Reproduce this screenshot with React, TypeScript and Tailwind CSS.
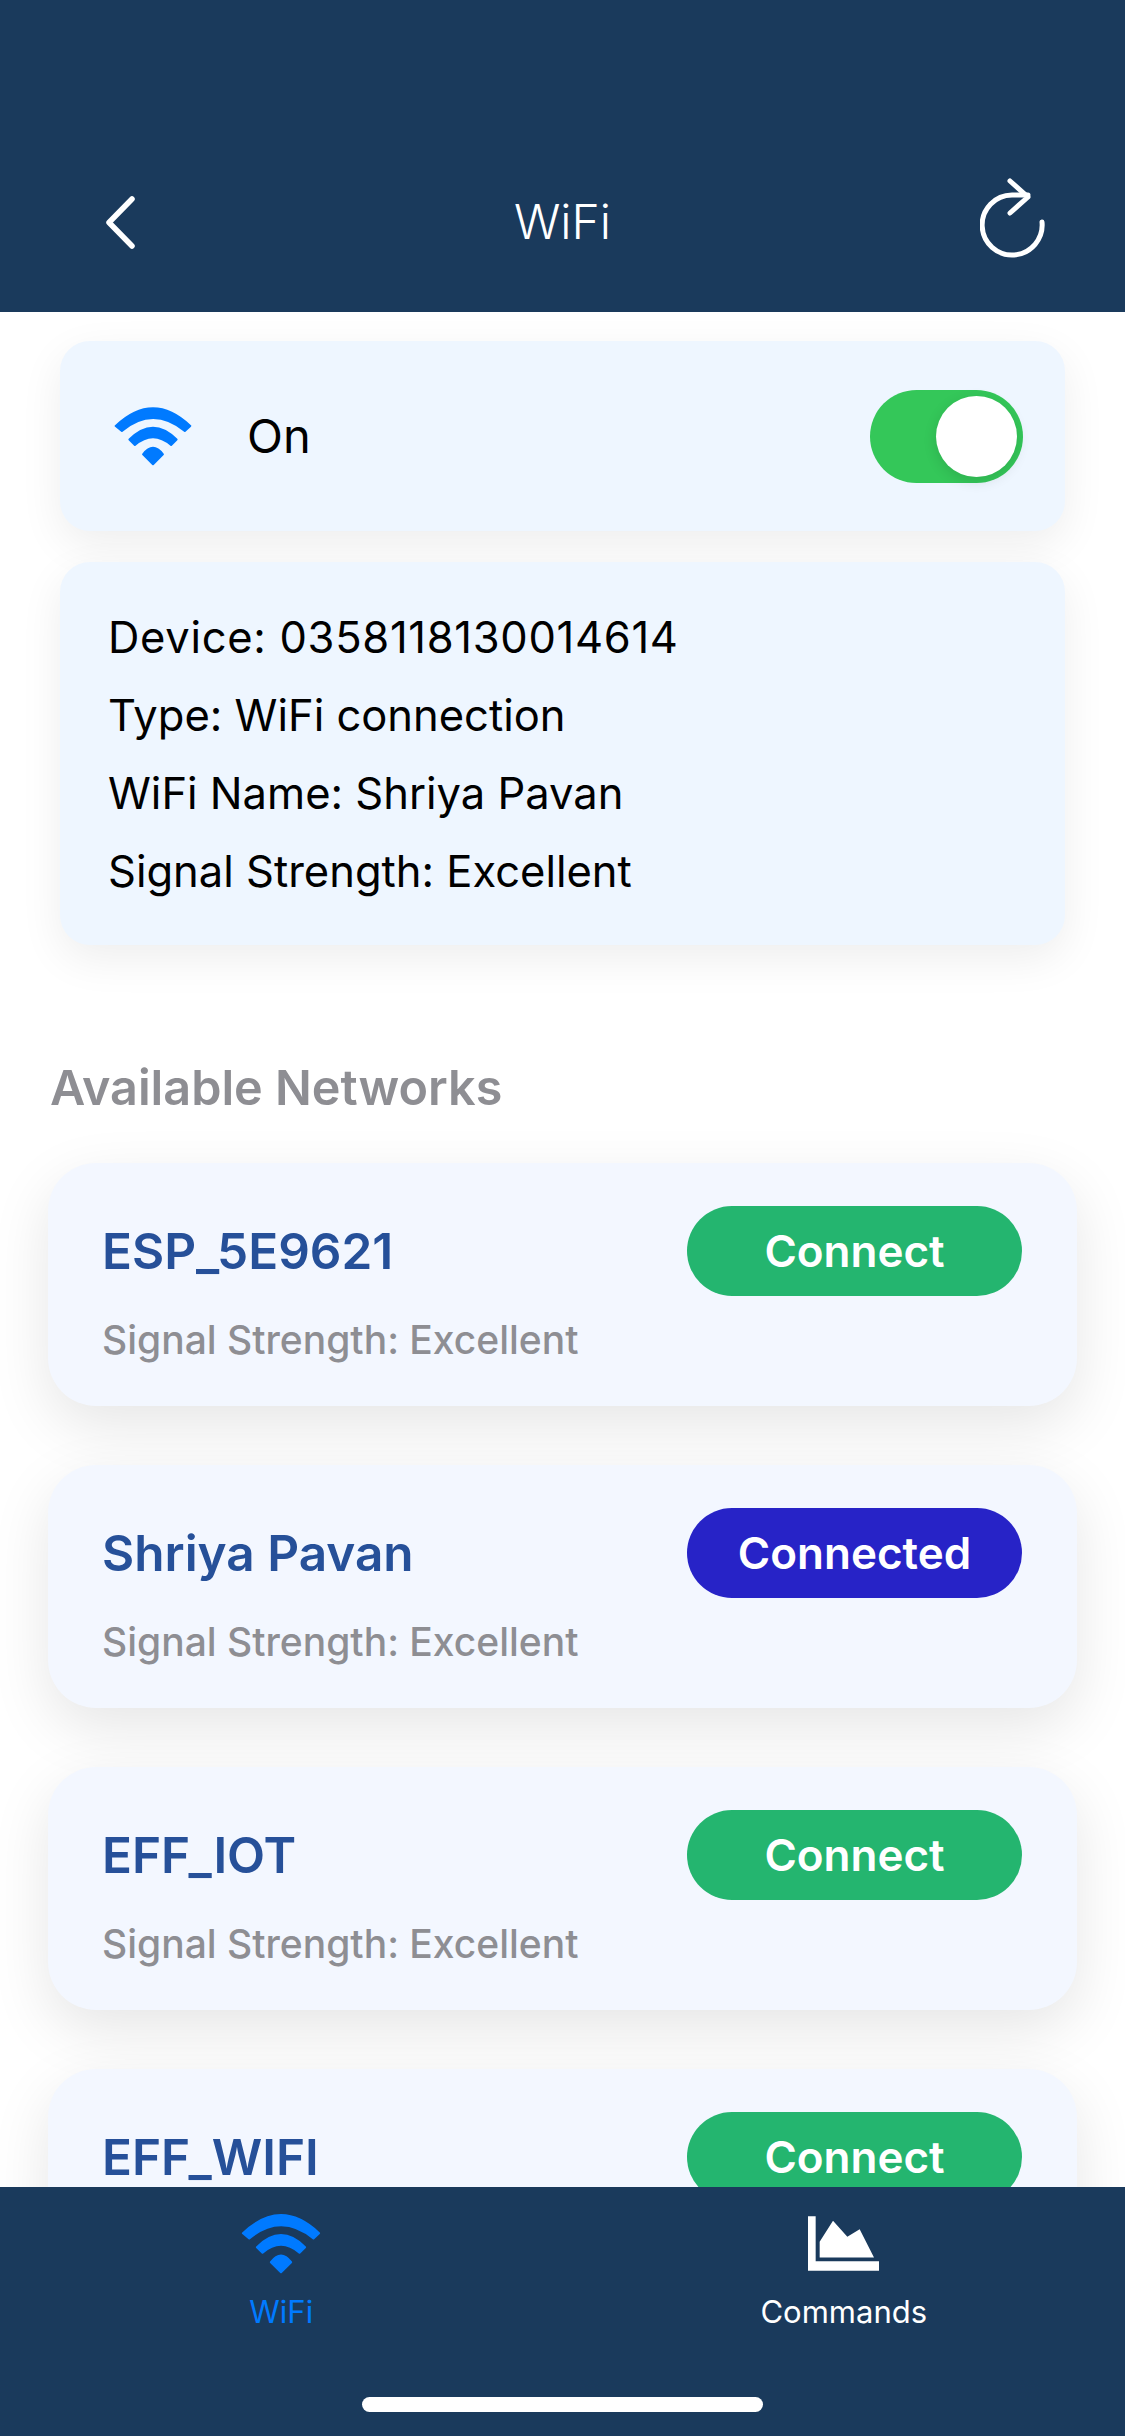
const FONT = "font-['Inter','Liberation_Sans',sans-serif]";

const networks = [
    { name: 'ESP_5E9621', connected: false, signal: 'Signal Strength: Excellent' },
    { name: 'Shriya Pavan', connected: true, signal: 'Signal Strength: Excellent' },
    { name: 'EFF_IOT', connected: false, signal: 'Signal Strength: Excellent' },
    // the rest of this row sits under the tab bar
    { name: 'EFF_WIFI', connected: false, signal: '' },
];

const details = ['Type: WiFi connection', 'WiFi Name: Shriya Pavan', 'Signal Strength: Excellent'];

function WifiGlyph({ className }: { className: string }) {
    return (
        <svg viewBox="40 40 234 172" className={className} fill="currentColor" stroke="currentColor" strokeWidth={6} strokeLinejoin="round">
            <path d="M48 95Q157 -8 266 95L250 110Q157 34 66 110Z" />
            <path d="M88 135Q157 66 226 135L210 151Q157 105 104 151Z" />
            <path d="M128 178Q157 140 186 178L157 207Z" />
        </svg>
    );
}

export default function App() {
    return (
        <div className={`relative flex h-[2436px] w-[1125px] flex-col overflow-hidden bg-white ${FONT}`}>
            <header className="flex h-[312px] shrink-0 items-center bg-[#1a3a5c] pl-[105px] pr-[79px] pt-[132px] text-white">
                <div className="w-[40px]">
                    <svg viewBox="0 0 31 53" className="h-[53px] w-[31px]" fill="none" stroke="currentColor" strokeWidth={5.5} strokeLinecap="round" strokeLinejoin="round">
                        <path d="M27 3L4 26.5L27 50" />
                    </svg>
                </div>
                <h1 className="flex-1 text-center text-[48px] leading-[56px] font-light">WiFi</h1>
                <svg viewBox="0 0 66 84" className="mb-[10px] h-[84px] w-[66px]" fill="none" stroke="currentColor" strokeWidth={5} strokeLinecap="round" strokeLinejoin="round">
                    <path d="M62 47A30 30 0 1 1 32 20H48" />
                    <path d="M30 6L48 22L30 38" />
                </svg>
            </header>

            <main className="flex min-h-0 flex-1 flex-col overflow-hidden">
                <section className="mx-[60px] mt-[29px] flex h-[190px] shrink-0 items-center rounded-[30px] bg-[#eef6ff] pl-[53px] pr-[42px] shadow-[0_14px_44px_rgba(0,0,0,0.07)]">
                    <WifiGlyph className="h-[59px] w-[80px] text-[#007aff]" />
                    <span className="ml-[54px] flex-1 text-[47px] text-black">On</span>
                    <div className="flex h-[93px] w-[153px] items-center justify-end rounded-full bg-[#34c759] pr-[6px]">
                        <div className="h-[81px] w-[81px] rounded-full bg-white shadow-[0_4px_14px_rgba(0,0,0,0.12)]" />
                    </div>
                </section>

                <section className="mx-[60px] mt-[31px] flex h-[383px] shrink-0 flex-col justify-center rounded-[30px] bg-[#eef6ff] px-[48px] shadow-[0_14px_44px_rgba(0,0,0,0.07)]">
                    <p className="text-[43.5px] leading-[78px] tracking-[0.7px] text-black">Device: 0358118130014614</p>
                    {details.map((line) => (
                        <p key={line} className="text-[43.5px] leading-[78px] text-black">{line}</p>
                    ))}
                </section>

                <h2 className="mx-[50px] mt-[113px] shrink-0 text-[48.5px] leading-[60px] font-semibold text-[#8e8e93]">Available Networks</h2>

                <div className="mt-[45px] flex flex-col gap-[59px] px-[48px]">
                    {networks.map((net) => (
                        <article key={net.name} className="h-[243px] shrink-0 rounded-[48px] bg-[#f3f7ff] pl-[54px] pr-[55px] pt-[43px] shadow-[0_20px_60px_rgba(0,0,0,0.1)]">
                            <div className="flex items-center justify-between">
                                <span className="text-[49.5px] font-semibold text-[#265099]">{net.name}</span>
                                <button className={`flex h-[90px] w-[335px] items-center justify-center rounded-full text-[44px] font-semibold text-white ${net.connected ? 'bg-[#2723c7]' : 'bg-[#24b56f]'}`}>
                                    {net.connected ? 'Connected' : 'Connect'}
                                </button>
                            </div>
                            {net.signal && <p className="mt-[22px] text-[39px] leading-[44px] font-medium text-[#8e8e93]">{net.signal}</p>}
                        </article>
                    ))}
                </div>
            </main>

            <nav className="relative z-10 flex h-[249px] shrink-0 bg-[#1a3a5c] pt-[27px]">
                <div className="flex flex-1 flex-col items-center">
                    <WifiGlyph className="h-[60px] w-[82px] text-[#007aff]" />
                    <span className="mt-[21px] text-[31px] leading-[34px] text-[#007aff]">WiFi</span>
                </div>
                <div className="flex flex-1 flex-col items-center">
                    <svg viewBox="0 0 213 164" className="mt-[2px] h-[55px] w-[71px] text-white" fill="currentColor">
                        <path d="M0 0H23V135H213V164H0Z" />
                        <path d="M35 124V77L75 14L118 62L155 39L198 124Z" />
                    </svg>
                    <span className="mt-[24px] text-[31px] leading-[34px] text-white">Commands</span>
                </div>
            </nav>

            <div className="absolute bottom-[24px] left-[362px] z-20 h-[15px] w-[401px] rounded-full bg-white" />
        </div>
    );
}
